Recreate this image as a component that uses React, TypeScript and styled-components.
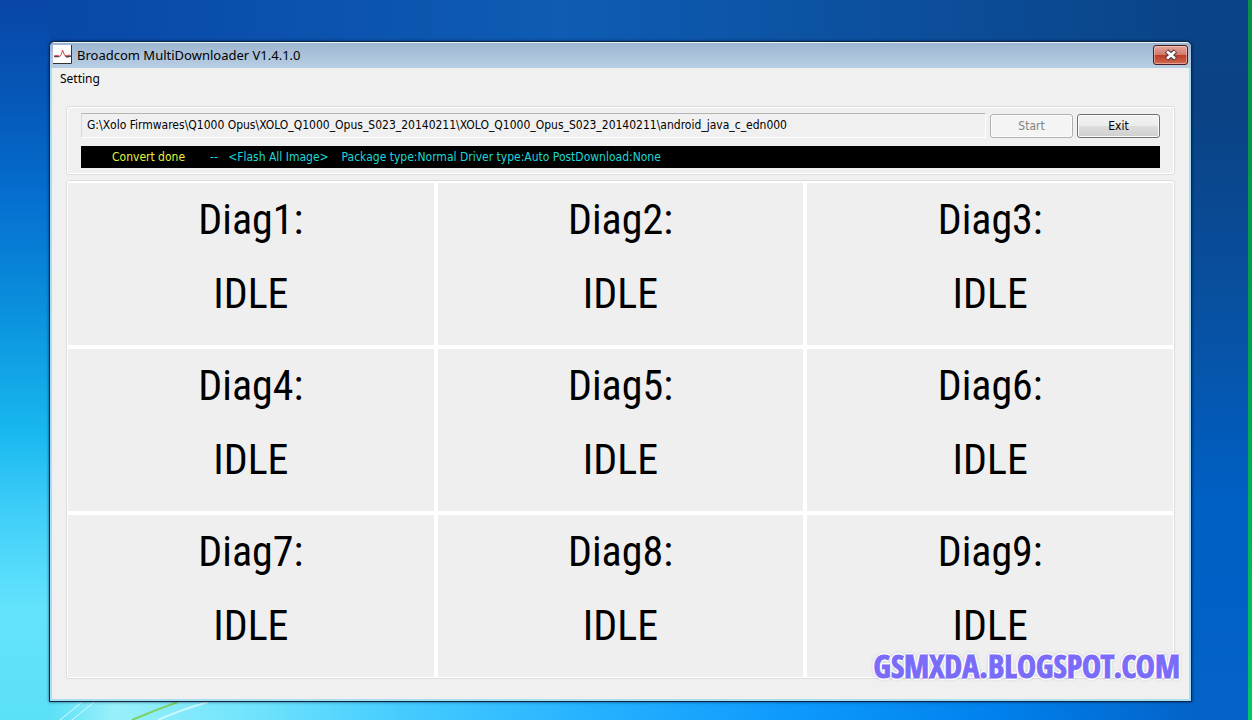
import React from 'react';
import styled, { createGlobalStyle } from 'styled-components';

const GlobalStyle = createGlobalStyle`
  *, *::before, *::after { box-sizing: border-box; }
  html, body { margin: 0; }
  body { color: #000; font: 12px/16px "DejaVu Sans Condensed", "DejaVu Sans", sans-serif; }
`;

const Desktop = styled.div`
  position: relative;
  isolation: isolate;
  display: flex;
  min-height: 100vh;
  padding: 41px 60px 18px 49px;
  overflow: hidden;
  background:
    linear-gradient(#0a9048 0%, #00a050 45%, #00c864 100%) right / 4px 100% no-repeat,
    linear-gradient(#0a4488 0%, #0a4284 15%, #0850a0 42%, #0060c4 70%, #0462c8 100%) right / 60px 100% no-repeat,
    linear-gradient(#0846a6 0%, #0558b8 14%, #0570d0 28%, #0a90dc 43%, #18b8f0 60%, #3cccf8 70%, #64e4fc 85%, #5ae0f7 100%) left / 49px 100% no-repeat,
    linear-gradient(to right, #0846a6 0%, #0e5cb4 45%, #0a4488 95%) top / 100% 60px no-repeat,
    linear-gradient(to right, #5ae0f7 0%, #5ae0f7 4%, #98f0fa 9%, #70e4fc 20%, #45ccff 32%, #25b0ff 48%, #0c98fc 64%, #0080ec 80%, #0462c8 96%);
`;

const Streaks = styled.svg`
  position: absolute;
  z-index: -1;
  left: 0;
  bottom: 0;
  width: 300px;
  height: 18px;
`;

const Window = styled.main`
  display: flex;
  flex: 1;
  flex-direction: column;
  border: 1px solid #10263c;
  border-radius: 6px 6px 0 0;
  overflow: hidden;
  background: #a8def2;
  box-shadow: 0 0 3px rgba(0, 16, 48, 0.7);
`;

const TitleBar = styled.header`
  display: flex;
  align-items: center;
  gap: 5px;
  height: 26px;
  padding: 0 3px 2px;
  border-top: 1px solid #e4f2fa;
  background: linear-gradient(#9db6d1, #b8cee4);
  font: 13px/16px "Noto Sans", sans-serif;
`;

const AppTitle = styled.h1`
  flex: 1;
  margin: 0;
  font: inherit;
`;

const CloseButton = styled.button`
  display: flex;
  align-items: center;
  justify-content: center;
  width: 35px;
  height: 20px;
  padding: 0;
  border: 1px solid #4a1c20;
  border-radius: 3px;
  background: linear-gradient(#e4a79c 0%, #d3786a 48%, #bd3a24 50%, #cf6a50 100%);
  box-shadow: inset 0 0 0 1px rgba(255, 220, 210, 0.5);
`;

const Client = styled.div`
  display: flex;
  flex: 1;
  flex-direction: column;
  margin: 0 2px 2px;
  background: #f0f0f0;
`;

const MenuBar = styled.nav`
  display: flex;
  height: 22px;
  padding: 0 8px;
`;

const MenuItem = styled.button`
  padding: 0;
  border: 0;
  background: none;
  color: #000;
  font: 12px/18px "Noto Sans", sans-serif;
`;

const Content = styled.div`
  display: flex;
  flex: 1;
  flex-direction: column;
  gap: 5px;
  padding: 16px 14px 20px;
`;

const Group = styled.section`
  display: flex;
  flex-direction: column;
  gap: 8px;
  padding: 6px 14px;
  border: 1px solid #dcdcdc;
  border-radius: 3px;
  box-shadow: inset 0 0 0 1px #fff;
`;

const Toolbar = styled.div`
  display: flex;
  align-items: flex-end;
  gap: 4px;
`;

const PathField = styled.input`
  flex: 1;
  min-width: 0;
  height: 25px;
  padding: 0 5px 2px;
  border: 1px solid #fff;
  border-top-color: #b4b4b4;
  border-left-color: #d8d8d8;
  background: #f0f0f0;
  color: #000;
  font: inherit;
`;

const PushButton = styled.button`
  width: 83px;
  height: 24px;
  padding: 0;
  border: 1px solid #707070;
  border-radius: 3px;
  background: linear-gradient(#f2f2f2 0%, #ebebeb 48%, #dddddd 50%, #cfcfcf 100%);
  box-shadow: inset 0 0 0 1px #fcfcfc;
  color: #000;
  font: inherit;

  &:disabled {
    border-color: #adb2b5;
    background: #f4f4f4;
    color: #838383;
  }
`;

const StatusBar = styled.div`
  display: flex;
  height: 22px;
  padding: 0 31px;
  background: #000;
  color: #1fd6d6;
  line-height: 22px;
  white-space: pre;
`;

const Result = styled.span`
  margin-right: 25px;
  color: #e2f23a;
`;

const Mode = styled.span`
  margin-right: 13px;
`;

const Channels = styled.section`
  display: grid;
  flex: 1;
  grid-template-columns: repeat(3, 1fr);
  grid-auto-rows: 1fr;
  gap: 4px;
  padding: 2px 1px 1px;
  border: 1px solid #dcdcdc;
  border-radius: 3px;
  background: #fff;
`;

const Channel = styled.article`
  background: #f0eff0;
  font: 42px/74px "Roboto Condensed", "Liberation Sans", sans-serif;
  text-align: center;
`;

const Line = styled.p`
  margin: 0;
`;

const Watermark = styled.div`
  position: absolute;
  right: 72px;
  bottom: 36px;
  color: #7a6cf8;
  font: bold 32px/36px "Open Sans Condensed", "Liberation Sans", sans-serif;
  -webkit-text-stroke: 1px #7a6cf8;
  text-shadow: 2px 0 #fff, -2px 0 #fff, 0 2px #fff, 0 -2px #fff, 1px 1px #fff, -1px -1px #fff, 0 0 4px #999;
`;

const channels = [1, 2, 3, 4, 5, 6, 7, 8, 9];

export default function App() {
  return (
    <>
      <GlobalStyle />
      <Desktop>
        <Streaks viewBox="0 0 300 18" aria-hidden="true">
          <path d="M60 18 L82 0 M72 18 L94 0" stroke="#d8fbff" strokeWidth="1" fill="none" />
          <path d="M132 18 Q155 8 178 0" stroke="#7ed067" strokeWidth="2" fill="none" />
          <path d="M158 18 Q180 8 208 0" stroke="#c8f8ff" strokeWidth="2" fill="none" />
        </Streaks>
        <Window>
          <TitleBar>
            <svg width="19" height="19" viewBox="0 0 19 19" aria-hidden="true">
              <rect width="19" height="19" fill="#fff" />
              <path d="M0 18.5H18.5V0" stroke="#333" fill="none" />
              <path d="M1 11.500H6M12 10.500L14 12L18 11" stroke="#444" strokeWidth="1.4" fill="none" />
              <path d="M1 11L4 10.500L7 11.500L8.500 9L9.500 5L11 9L12.500 11L17 10" stroke="#d8404c" fill="none" />
            </svg>
            <AppTitle>Broadcom MultiDownloader V1.4.1.0</AppTitle>
            <CloseButton aria-label="Close">
              <svg width="14" height="12" viewBox="0 0 14 12" aria-hidden="true">
                <path d="M2.500 2L11.500 10M11.500 2L2.500 10" stroke="#5a3a40" strokeWidth="5" />
                <path d="M3 2.500L11 9.500M11 2.500L3 9.500" stroke="#fff" strokeWidth="2.600" />
              </svg>
            </CloseButton>
          </TitleBar>
          <Client>
            <MenuBar>
              <MenuItem>Setting</MenuItem>
            </MenuBar>
            <Content>
              <Group>
                <Toolbar>
                  <PathField
                    aria-label="Firmware path"
                    readOnly
                    value="G:\Xolo Firmwares\Q1000 Opus\XOLO_Q1000_Opus_S023_20140211\XOLO_Q1000_Opus_S023_20140211\android_java_c_edn000"
                  />
                  <PushButton disabled>Start</PushButton>
                  <PushButton>Exit</PushButton>
                </Toolbar>
                <StatusBar role="status">
                  <Result>Convert done</Result>
                  <Mode>{'--   <Flash All Image>'}</Mode>
                  <span>Package type:Normal Driver type:Auto PostDownload:None</span>
                </StatusBar>
              </Group>
              <Channels>
                {channels.map((n) => (
                  <Channel key={n}>
                    <Line>Diag{n}:</Line>
                    <Line>IDLE</Line>
                  </Channel>
                ))}
              </Channels>
            </Content>
          </Client>
        </Window>
        <Watermark>GSMXDA.BLOGSPOT.COM</Watermark>
      </Desktop>
    </>
  );
}
